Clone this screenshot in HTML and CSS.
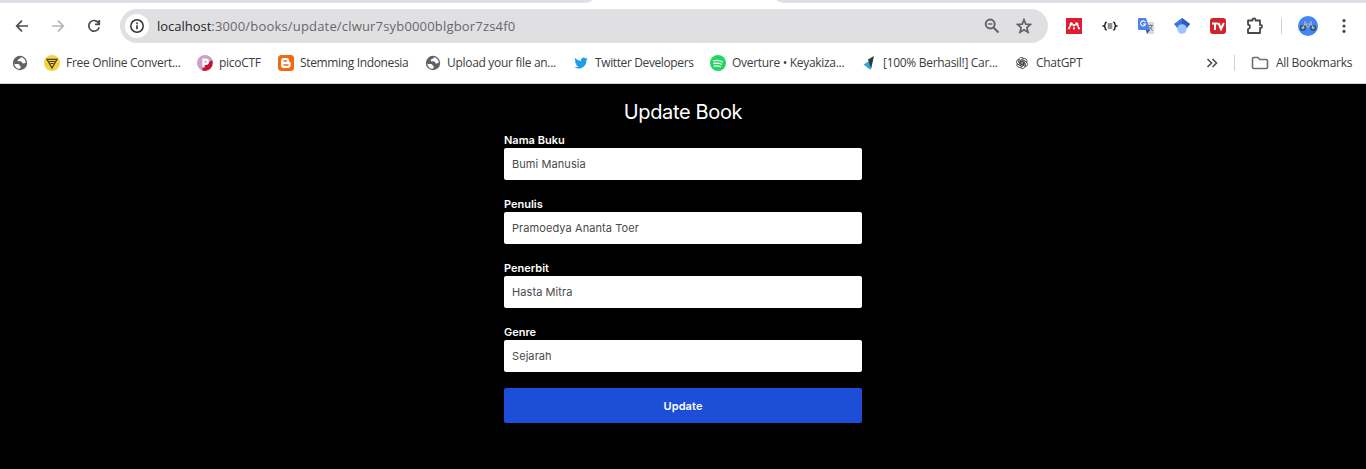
FILE: index.html
```html
<!DOCTYPE html>
<html lang="en">
<head>
<meta charset="utf-8">
<title>Update Book</title>
<link rel="stylesheet" href="styles.css">
</head>
<body>
<svg class="defs" width="0" height="0">
  <symbol id="globe" viewBox="0 0 16 16">
    <circle cx="8" cy="8" r="7.2" fill="#5f6368"/>
    <path d="M2.400 8.200C3 9.300 4.500 9 6 9c1.500.2 1.300 1.500 2.200 1.900.9.300.6 1.600-.2 2.900C5 13.900 2.300 11.500 2.400 8.200zM8.800 2.300c-.2 1.200-.8 1.500-2 1.600-.8.200-.6 1.300-1.300 1.800 1 .9 2.700.2 3.800.7 1 .6.700 1.900 1.900 2 1 .1 1.500-.6 2.400-.4.200-3-1.900-5.400-4.800-5.700z" fill="#fff"/>
  </symbol>
</svg>
<div class="browser">
  <div class="tabstrip"><span class="tab-left"></span><span class="tab-right"></span></div>
  <div class="toolbar">
    <div class="nav">
      <svg width="16" height="16" viewBox="0 0 16 16" fill="none" stroke="#4a4d51" stroke-width="1.700"><path d="M14 8H3M8 2.700 2.700 8 8 13.300"/></svg>
      <svg width="16" height="16" viewBox="0 0 16 16" fill="none" stroke="#b4b5b8" stroke-width="1.700"><path d="M2 8h11M8 2.700 13.300 8 8 13.300"/></svg>
      <svg width="16" height="16" viewBox="0 0 16 16" fill="none" stroke="#4a4d51" stroke-width="1.700"><path d="M12.600 5A5.300 5.300 0 1 0 13.200 9.300M13.300 2v4.300H9"/></svg>
    </div>
    <div class="omnibox">
      <span class="info"><svg width="16" height="16" viewBox="0 0 16 16"><circle cx="8" cy="8" r="6.200" fill="none" stroke="#303134" stroke-width="1.500"/><path d="M8 7.200v4M8 4.600v1.600" stroke="#303134" stroke-width="1.600"/></svg></span>
      <span class="url"><span class="host">localhost</span>:3000/books/update/clwur7syb0000blgbor7zs4f0</span>
      <svg class="lens" width="16" height="16" viewBox="0 0 16 16" fill="none" stroke="#5f6368"><circle cx="6.200" cy="6" r="4.500" stroke-width="1.900"/><path d="M4 6h4.400" stroke-width="1.400"/><path d="m9.500 9.500 5 5" stroke-width="2"/></svg>
      <svg width="16" height="16" viewBox="0 0 16 16"><path d="m8 1.700 1.800 4.400 4.700.4-3.600 3.100 1.100 4.600L8 11.700l-4 2.500 1.100-4.600-3.600-3.100 4.700-.4z" fill="none" stroke="#5f6368" stroke-width="1.700"/></svg>
    </div>
    <div class="extensions">
      <svg width="16" height="16" viewBox="0 0 16 16"><path fill="#e11b30" d="M0 0h16v16H0z"/><g fill="#fff"><circle cx="5.300" cy="5.900" r="1.700"/><circle cx="10.700" cy="5.900" r="1.700"/><circle cx="8" cy="7.300" r="1.300"/><circle cx="3" cy="10.300" r="1.100"/><circle cx="13" cy="10.300" r="1.100"/><circle cx="8" cy="10.400" r="1.100"/></g><path d="M4.700 6 3.400 10M11.300 6l1.300 4" stroke="#fff" stroke-width="1.400"/></svg>
      <svg width="16" height="16" viewBox="0 0 16 16" fill="none" stroke="#222" stroke-width="1.500"><path d="M4.800 4.200Q3.200 4.200 3.200 5.800T1.700 8Q3.200 8.500 3.200 10.200T4.800 11.800M11.200 4.200q1.600 0 1.600 1.600T14.300 8q-1.500.5-1.500 2.200T11.200 11.800"/><path d="M5.700 6h4.600M5.700 8h4.600M5.700 10h4.600" stroke-width="1"/></svg>
      <svg width="16" height="16" viewBox="0 0 16 16"><path fill="#d5d8dc" d="M6 4h9q1 0 1 1v10q0 1-1 1H9z"/><path fill="#4c83e8" d="M1 0h7l4 12H1q-1 0-1-1V1q0-1 1-1z"/><path fill="#3459a8" d="M8 12h4l-3 4z"/><path d="M7.300 4.300A2.500 2.500 0 1 0 7.500 6H5.200" fill="none" stroke="#fff" stroke-width="1.100"/><path d="M10 7.500h5M12.500 6.500v1M14 7.500q-.8 3-3 4.500M11.500 9l3 3.500" fill="none" stroke="#6c7d88"/></svg>
      <svg width="16" height="16" viewBox="0 0 16 16"><path fill="#3977d5" d="m8 0 8 6-3 3.700H3L0 6z"/><path fill="#2b5db9" d="m8 0 8 6-3 3.700L8 6z"/><circle cx="8" cy="11" r="4.800" fill="#a0c3ff"/></svg>
      <svg width="16" height="16" viewBox="0 0 16 16"><rect width="16" height="16" rx="3" fill="#cf242b"/><path d="M2 5.500h6M5 5.500V12M8.500 5l2.500 6 2.800-6" fill="none" stroke="#fff" stroke-width="2"/></svg>
      <svg width="18" height="18" viewBox="0 0 18 18"><path d="M2 3.500h4.500v-1q0-1 1.500-1t1.500 1v1H14V8h.8q1.200 0 1.200 1.500T14.800 11H14v5H2v-4q2-.5 2-2.300T2 7.500z" fill="none" stroke="#45484c" stroke-width="1.800" stroke-linejoin="round"/></svg>
      <i class="rule"></i>
      <svg class="avatar" width="20" height="20" viewBox="0 0 20 20"><circle cx="10" cy="10" r="10" fill="#4285f4"/><g fill="none" stroke="#263d50" stroke-width="1.100"><circle cx="4.900" cy="11.800" r="2.300" fill="#8eb4cc"/><circle cx="15.100" cy="11.800" r="2.300" fill="#8eb4cc"/><path stroke="#c8b5b4" stroke-width="1" d="m4.900 11.500 2-3.500h5.500L10 11.800 7 8 6.300 6H8M15.100 11.500 12.300 6H14"/></g></svg>
      <svg width="16" height="16" viewBox="0 0 16 16" fill="#45484c"><circle cx="8" cy="2.700" r="1.600"/><circle cx="8" cy="8" r="1.600"/><circle cx="8" cy="13.300" r="1.600"/></svg>
    </div>
  </div>
  <div class="bookmarks">
    <a class="bookmark"><svg><use href="#globe"/></svg></a>
    <a class="bookmark"><svg viewBox="0 0 16 16"><circle cx="8" cy="8" r="8" fill="#f5d33b"/><path d="M3 4.300h10L8 13zM5.200 6.500h5.500M6.500 8.500h3" fill="none" stroke="#413a1e" stroke-width="1.200"/></svg><span class="w-convert">Free Online Convert...</span></a>
    <a class="bookmark"><svg viewBox="0 0 16 16"><circle cx="8" cy="8" r="8" fill="#cda0c5"/><path fill="#c41230" d="M5.500 12 15 5A8 8 0 0 1 5.500 15.600z"/><path d="M6.500 12.500V4.700h2.200a2.100 2.100 0 0 1 0 4.200H6.500" fill="none" stroke="#fff" stroke-width="2.300"/></svg><span class="w-pico">picoCTF</span></a>
    <a class="bookmark"><svg viewBox="0 0 16 16"><rect width="16" height="16" rx="3.500" fill="#f06a14"/><path d="M6 3h2.500Q11 3 11 5.500q0 1.500 1 1.500.7 0 .7 1v2q0 3-3 3H6q-3 0-3-3V6q0-3 3-3z" fill="#fff"/><path d="M6 6h2.300M6 10h4" stroke="#f06a14" stroke-width="1.400" stroke-linecap="round"/></svg><span class="w-stem">Stemming Indonesia</span></a>
    <a class="bookmark"><svg><use href="#globe"/></svg><span class="w-upload">Upload your file an...</span></a>
    <a class="bookmark"><svg viewBox="0 0 24 24"><path transform="translate(2 2) scale(.84)" fill="#1c9fe5" d="M23.950 4.570a10 10 0 0 1-2.820.77 4.960 4.960 0 0 0 2.160-2.720c-.95.550-2 .95-3.130 1.180a4.920 4.920 0 0 0-8.380 4.480C7.690 8.090 4.070 6.130 1.640 3.160a4.920 4.920 0 0 0 1.520 6.570 4.900 4.900 0 0 1-2.230-.61v.06a4.920 4.920 0 0 0 3.950 4.830 5 5 0 0 1-2.210.08 4.940 4.940 0 0 0 4.600 3.420A9.870 9.870 0 0 1 0 19.540a13.990 13.990 0 0 0 7.550 2.210c9.050 0 14-7.500 14-13.980 0-.21 0-.42-.02-.63a9.930 9.930 0 0 0 2.460-2.550z"/></svg><span class="w-twitter">Twitter Developers</span></a>
    <a class="bookmark"><svg viewBox="0 0 16 16"><circle cx="8" cy="8" r="8" fill="#1ed760"/><path d="M3.500 5.800q4.500-1.300 9 1M4 8.500q4-1 7.500.8M4.500 11q3.200-.7 6 .8" fill="none" stroke="#fff" stroke-width="1.300" stroke-linecap="round"/></svg><span class="w-overture">Overture • Keyakiza...</span></a>
    <a class="bookmark"><svg viewBox="0 0 16 16"><path fill="#25a9e0" d="M2.500 9.500 9 5.500 9.500 15z"/><path fill="#303a44" d="M7 4.500 13 1 10 14.500 8.500 9z"/></svg><span class="w-career">[100% Berhasil!] Car...</span></a>
    <a class="bookmark"><svg viewBox="0 0 16 16"><g fill="none" stroke="#45484b" stroke-width=".9" transform="translate(.3 .3) scale(.96)"><path id="petal" d="M7.700 9.700 4.800 8V4.800a2.800 2.800 0 0 1 5-1.600L6.800 5v5"/><use href="#petal" transform="rotate(60 8 8)"/><use href="#petal" transform="rotate(120 8 8)"/><use href="#petal" transform="rotate(180 8 8)"/><use href="#petal" transform="rotate(240 8 8)"/><use href="#petal" transform="rotate(300 8 8)"/></g></svg><span class="w-gpt">ChatGPT</span></a>
    <div class="more">
      <svg width="12" height="12" viewBox="0 0 12 12" fill="none" stroke="#4b4e52" stroke-width="1.600"><path d="m1.500 2 4 4-4 4M6.500 2l4 4-4 4"/></svg>
      <i class="rule"></i>
      <svg class="folder" width="18" height="16" viewBox="0 0 18 16"><path d="M2.800 2.500h4l2 2h6.400q1.300 0 1.300 1.300v6.400q0 1.300-1.300 1.300H2.800q-1.300 0-1.300-1.300V3.800q0-1.300 1.300-1.300z" fill="none" stroke="#6b6e72" stroke-width="1.600"/></svg>
      <span class="w-all">All Bookmarks</span>
    </div>
  </div>
</div>
<main class="page">
  <h1>Update Book</h1>
  <form>
    <label>Nama Buku<input type="text" value="Bumi Manusia"></label>
    <label>Penulis<input type="text" value="Pramoedya Ananta Toer"></label>
    <label>Penerbit<input type="text" value="Hasta Mitra"></label>
    <label>Genre<input type="text" value="Sejarah"></label>
    <button type="button">Update</button>
  </form>
</main>
</body>
</html>
```
FILE: styles.css
```css
* { box-sizing: border-box; }
body { margin: 0; height: 469px; overflow: hidden; background: #000; font-family: Inter, sans-serif; }
svg { display: block; flex: none; }
.defs { position: absolute; }

.browser { height: 84px; background: #fff; border-bottom: 1px solid #d5d5d9; font-family: "Open Sans", "Noto Sans", sans-serif; }
.tabstrip { height: 3px; display: flex; justify-content: space-between; }
.tab-left, .tab-right { height: 3px; background: #dfe0e7; }
.tab-left { width: 592px; border-bottom-right-radius: 8px 3px; }
.tab-right { width: 589px; border-bottom-left-radius: 8px 3px; }
.toolbar { height: 46px; display: flex; align-items: center; }
.nav { width: 120px; padding-left: 14px; display: flex; gap: 20px; }
.omnibox { width: 928px; height: 34px; border-radius: 17px; background: #e0e0e3; display: flex; align-items: center; padding: 0 16px 0 5px; }
.info { width: 24px; height: 24px; border-radius: 50%; background: #fff; display: grid; place-items: center; }
.url { margin-left: 8px; flex: 1; font-size: 13px; color: #66686b; letter-spacing: 0.18px; white-space: nowrap; }
.host { color: #242629; letter-spacing: -0.02px; }
.lens { margin-right: 16px; }
.extensions { display: flex; align-items: center; gap: 20px; padding-left: 18px; }
.extensions .rule { margin: 0 -4px 0 -3px; }
.extensions .rule + svg { margin-right: -2px; }
.rule { width: 1px; height: 16px; background: #d0d2d6; }

.bookmarks { height: 28px; display: flex; align-items: center; gap: 16px; padding: 0 14px 0 12px; font-size: 12px; line-height: 16px; color: #3b3d40; white-space: nowrap; }
.bookmark { display: flex; align-items: center; gap: 6px; }
.bookmark svg { width: 16px; height: 16px; }
.bookmarks span { display: block; letter-spacing: -0.3px; }
.bookmarks .w-stem { width: 109px; letter-spacing: -0.35px; }
.bookmarks .w-twitter { width: 99px; letter-spacing: -0.38px; }
.w-convert { width: 115px; }
.w-pico { width: 43px; }
.w-upload { width: 110px; }
.w-overture { width: 113px; }
.w-career { width: 115px; }
.w-gpt { width: 46px; }
.w-all { width: 76px; }
.more { margin-left: auto; display: flex; align-items: center; gap: 16px; }
.folder { margin-right: -9px; }

.page { padding-top: 16px; }
h1 { margin: 0; font-size: 20px; line-height: 24px; font-weight: 400; text-align: center; color: #fff; letter-spacing: -0.35px; }
form { width: 358px; margin: 8px auto 0; display: flex; flex-direction: column; gap: 16px; }
label { display: block; height: 48px; font-size: 11px; line-height: 16px; font-weight: 600; color: #fff; }
input { display: block; width: 100%; height: 32px; border: 0; border-radius: 2px; padding: 0 8px; background: #fff; color: #4a4a4a; font: 11px Inter, sans-serif; letter-spacing: 0.08px; }
button { height: 35px; border: 0; border-radius: 2px; background: #1d4ed8; color: #fff; font: 600 11px Inter, sans-serif; letter-spacing: 0.1px; }
```
